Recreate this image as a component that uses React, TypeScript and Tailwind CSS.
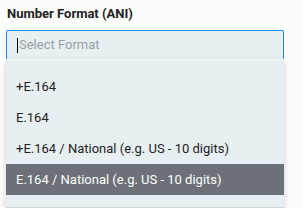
const options = [
  "+E.164",
  "E.164",
  "+E.164 / National (e.g. US - 10 digits)",
  "E.164 / National (e.g. US - 10 digits)",
]

export default function App() {
  const selected = 3

  return (
    <div className="w-[303px] h-[208px] overflow-hidden bg-[#fcfcfc] font-['Roboto',sans-serif]">
      <div className="pl-[7px] pt-[4px] h-[30px] text-[13px] font-bold text-[#222]">Number Format (ANI)</div>
      <div className="ml-[6px] w-[278px]">
        <div className="h-[29px] flex items-center pl-[10px] bg-[#e8eff2] border border-b-0 border-[#1a8cff] rounded-t-[2px]">
          <span className="w-px h-[15px] bg-black mr-px" />
          <span className="text-[13px] text-[#9aa0a6]">Select Format</span>
        </div>
        <div className="mt-[1px] h-[148px] pt-[11px] bg-[#e8eff2] border-b border-[#cfd6da] shadow-[0_2px_6px_rgba(0,0,0,0.18)]">
          {options.map((opt, i) => (
            <div
              key={opt}
              className={
                "h-[31px] flex items-center pl-[10px] text-[13px] " +
                (i === selected ? "bg-[#6c7177] text-white" : "text-[#222]")
              }
            >
              {opt}
            </div>
          ))}
        </div>
      </div>
    </div>
  )
}
